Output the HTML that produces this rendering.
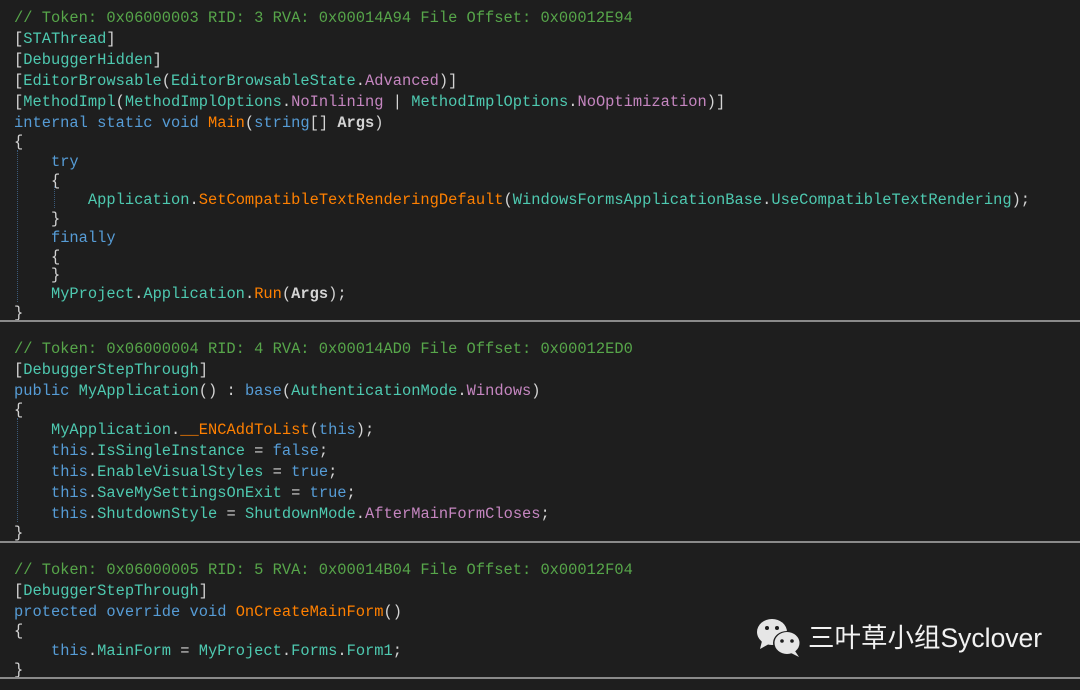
<!DOCTYPE html>
<html><head><meta charset="utf-8"><style>
body{margin:0;width:1080px;height:690px;background:#1e1e1e;overflow:hidden;position:relative;font-family:"Liberation Mono","Noto Sans CJK SC",monospace;font-size:15.4px;color:#d4d4d4}
.l{position:absolute;left:14px;white-space:pre;line-height:20px}
.c{color:#57a64a}.t{color:#4ec9b0}.k{color:#569cd6}.m{color:#ff8000}.p{color:#c586c0}.b{font-weight:bold}
.sep{position:absolute;left:0;width:1080px;height:2px;background:#8a8a8a}
.g{position:absolute;border-left:1px dotted #3a5a7a;width:0}
</style></head><body>
<div class="l c" style="top:8px">// Token: 0x06000003 RID: 3 RVA: 0x00014A94 File Offset: 0x00012E94</div>
<div class="l" style="top:29px">[<span class="t">STAThread</span>]</div>
<div class="l" style="top:50px">[<span class="t">DebuggerHidden</span>]</div>
<div class="l" style="top:71px">[<span class="t">EditorBrowsable</span>(<span class="t">EditorBrowsableState</span>.<span class="p">Advanced</span>)]</div>
<div class="l" style="top:92px">[<span class="t">MethodImpl</span>(<span class="t">MethodImplOptions</span>.<span class="p">NoInlining</span> | <span class="t">MethodImplOptions</span>.<span class="p">NoOptimization</span>)]</div>
<div class="l" style="top:113px"><span class="k">internal static void</span> <span class="m">Main</span>(<span class="k">string</span>[] <span class="b">Args</span>)</div>
<div class="l" style="top:132px">{</div>
<div class="l" style="top:152px">    <span class="k">try</span></div>
<div class="l" style="top:171px">    {</div>
<div class="l" style="top:190px">        <span class="t">Application</span>.<span class="m">SetCompatibleTextRenderingDefault</span>(<span class="t">WindowsFormsApplicationBase</span>.<span class="t">UseCompatibleTextRendering</span>);</div>
<div class="l" style="top:209px">    }</div>
<div class="l" style="top:228px">    <span class="k">finally</span></div>
<div class="l" style="top:247px">    {</div>
<div class="l" style="top:265px">    }</div>
<div class="l" style="top:284px">    <span class="t">MyProject</span>.<span class="t">Application</span>.<span class="m">Run</span>(<span class="b">Args</span>);</div>
<div class="l" style="top:303px">}</div>
<div class="g" style="left:17px;top:150px;height:152px"></div>
<div class="g" style="left:54px;top:186px;height:22px"></div>
<div class="sep" style="top:320px"></div>

<div class="l c" style="top:339px">// Token: 0x06000004 RID: 4 RVA: 0x00014AD0 File Offset: 0x00012ED0</div>
<div class="l" style="top:360px">[<span class="t">DebuggerStepThrough</span>]</div>
<div class="l" style="top:381px"><span class="k">public</span> <span class="t">MyApplication</span>() : <span class="k">base</span>(<span class="t">AuthenticationMode</span>.<span class="p">Windows</span>)</div>
<div class="l" style="top:400px">{</div>
<div class="l" style="top:420px">    <span class="t">MyApplication</span>.<span class="m">__ENCAddToList</span>(<span class="k">this</span>);</div>
<div class="l" style="top:441px">    <span class="k">this</span>.<span class="t">IsSingleInstance</span> = <span class="k">false</span>;</div>
<div class="l" style="top:462px">    <span class="k">this</span>.<span class="t">EnableVisualStyles</span> = <span class="k">true</span>;</div>
<div class="l" style="top:483px">    <span class="k">this</span>.<span class="t">SaveMySettingsOnExit</span> = <span class="k">true</span>;</div>
<div class="l" style="top:504px">    <span class="k">this</span>.<span class="t">ShutdownStyle</span> = <span class="t">ShutdownMode</span>.<span class="p">AfterMainFormCloses</span>;</div>
<div class="l" style="top:523px">}</div>
<div class="g" style="left:17px;top:418px;height:104px"></div>
<div class="sep" style="top:541px"></div>

<div class="l c" style="top:560px">// Token: 0x06000005 RID: 5 RVA: 0x00014B04 File Offset: 0x00012F04</div>
<div class="l" style="top:581px">[<span class="t">DebuggerStepThrough</span>]</div>
<div class="l" style="top:602px"><span class="k">protected override void</span> <span class="m">OnCreateMainForm</span>()</div>
<div class="l" style="top:621px">{</div>
<div class="l" style="top:641px">    <span class="k">this</span>.<span class="t">MainForm</span> = <span class="t">MyProject</span>.<span class="t">Forms</span>.<span class="t">Form1</span>;</div>
<div class="l" style="top:660px">}</div>
<div class="sep" style="top:677px"></div>

<svg style="position:absolute;left:755px;top:617px" width="50" height="42" viewBox="0 0 50 42">
<ellipse cx="17" cy="15" rx="15" ry="13" fill="#e6e6e6"/>
<path d="M7 24 L5 32 L14 27Z" fill="#e6e6e6"/>
<ellipse cx="32" cy="26" rx="14" ry="12" fill="#1e1e1e"/>
<ellipse cx="32" cy="26" rx="12.5" ry="11" fill="#e6e6e6"/>
<path d="M40 34 L44 40 L36 36Z" fill="#e6e6e6"/>
<circle cx="12" cy="11" r="2" fill="#1e1e1e"/><circle cx="22" cy="11" r="2" fill="#1e1e1e"/>
<circle cx="27" cy="24" r="1.8" fill="#1e1e1e"/><circle cx="37" cy="24" r="1.8" fill="#1e1e1e"/>
</svg>
<div style="position:absolute;left:808px;top:620px;font-family:'Liberation Sans','Noto Sans CJK SC',sans-serif;font-size:26.5px;color:#f2f2f2;line-height:36px">三叶草小组Syclover</div>
</body></html>
